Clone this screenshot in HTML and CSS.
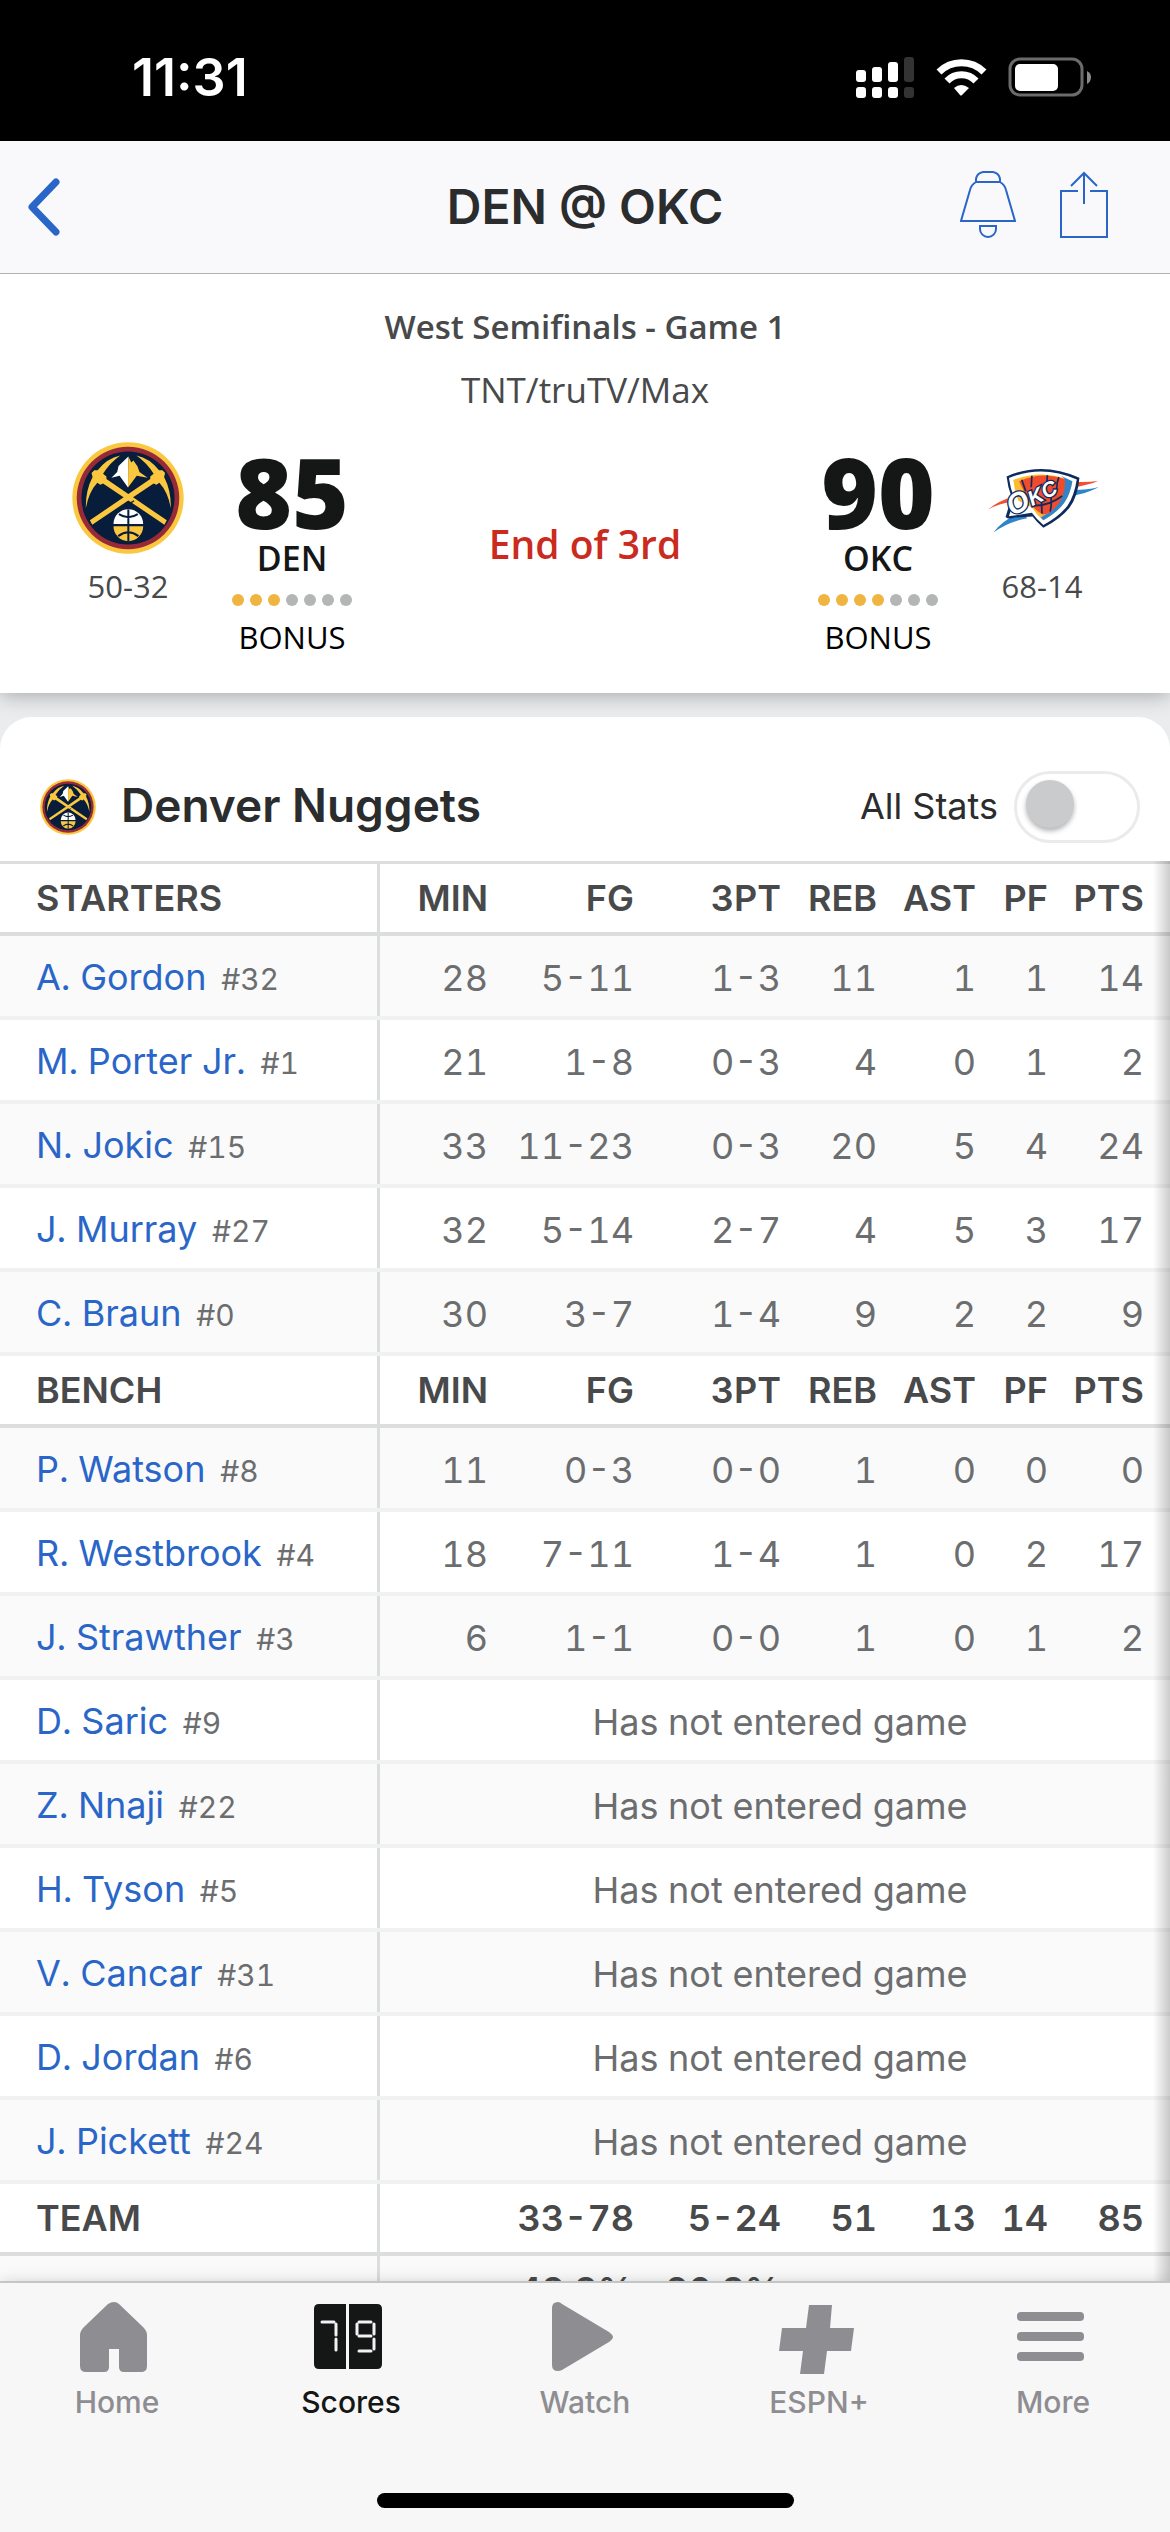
FILE: index.html
```html
<!DOCTYPE html>
<html lang="en">
<head>
  <meta charset="UTF-8">
  <meta name="viewport" content="width=device-width, initial-scale=1">
  <title>DEN @ OKC</title>
  <link rel="stylesheet" href="styles.css">
</head>
<body>

  <!-- Shared team logo -->
  <svg class="sprite" aria-hidden="true">
    <symbol id="nuggets" viewBox="0 0 332 332">
      <circle cx="166" cy="166" r="165" fill="#fac73e"/>
      <circle cx="166" cy="166" r="152" fill="#962a38"/>
      <circle cx="166" cy="166" r="138" fill="#071d3b"/>
      <path d="M167 43 L138 71 L134 89 L117 106 L141 100 L166 135 Z" fill="#fff"/>
      <path d="M167 43 L176 61 L182 55 L194 72 L200 89 L224 106 L192 100 L166 135 Z" fill="#fac73e"/>
      <g fill="#fac73e">
        <path d="M143 40 Q104 48 76 84 L66 84 L58 92 L61 104 Q40 144 41 196 Q50 148 75 121 L84 127 L92 123 L274 245 L281 232 L181 164 L102 110 L102 102 L92 94 Q112 62 143 40 Z"/>
        <path d="M191 40 Q230 48 258 84 L268 84 L276 92 L273 104 Q294 144 293 196 Q284 148 259 121 L250 127 L242 123 L60 245 L53 232 L153 164 L232 110 L232 102 L242 94 Q222 62 191 40 Z"/>
      </g>
      <path d="M172 182 L184 174" stroke="#071d3b" stroke-width="4"/>
      <path d="M123 243 A44 44 0 0 1 211 243 Z" fill="#fff"/>
      <path d="M123 250 A44 44 0 0 0 211 250 Z" fill="#fac73e"/>
      <path d="M167 200 V294 M139 214 Q167 232 195 214 M137 279 Q167 256 197 279" fill="none" stroke="#071d3b" stroke-width="6"/>
    </symbol>
  </svg>

  <div class="app">

    <div class="status">
      <span class="time">11:31</span>
      <svg class="status-icons" viewBox="0 0 236 42" aria-hidden="true">
        <g fill="#fff">
          <rect x="0" y="13" width="10" height="12" rx="3"/>
          <rect x="16" y="10" width="10" height="15" rx="3"/>
          <rect x="32" y="5" width="10" height="20" rx="3"/>
          <rect x="0" y="30" width="10" height="11" rx="3"/>
          <rect x="16" y="30" width="10" height="11" rx="3"/>
          <rect x="32" y="30" width="10" height="11" rx="3"/>
        </g>
        <g fill="#333">
          <rect x="48" y="0" width="10" height="25" rx="3"/>
          <rect x="48" y="30" width="10" height="11" rx="3"/>
        </g>
        <g fill="none" stroke="#fff" stroke-width="7">
          <path d="M83 15 A32 32 0 0 1 128 15"/>
          <path d="M91 24 A20 20 0 0 1 120 24"/>
        </g>
        <path d="M98 31 Q105 25 113 31 L106 38 Q105 39 104 38 Z" fill="#fff"/>
        <rect x="154" y="2" width="72" height="36" rx="10" fill="none" stroke="#6b6b6b" stroke-width="3"/>
        <rect x="159" y="7" width="43" height="27" rx="5" fill="#fff"/>
        <path d="M231 14 Q235 16 235 20 Q235 25 231 27 Z" fill="#8a8a8a"/>
      </svg>
    </div>

    <header class="nav">
      <a class="back" href="#" aria-label="Back">
        <svg width="34" height="58" viewBox="0 0 34 58"><path d="M29 4 L5 29 L29 54" fill="none" stroke="currentColor" stroke-width="7" stroke-linecap="round" stroke-linejoin="round"/></svg>
      </a>
      <h1>DEN @ OKC</h1>
      <div class="actions">
        <button type="button" aria-label="Alerts">
          <svg width="56" height="68" viewBox="0 0 56 68" fill="none" stroke="currentColor" stroke-width="2"><path d="M16 12 V8 Q17 2 23 1 H33 Q39 2 40 8 V12 M16 11 H40 Q45 14 46 19 L55 50 H1 L10 19 Q11 14 16 11 Z M20 55 H36 V58 A8 8 0 0 1 20 58 Z"/></svg>
        </button>
        <button type="button" aria-label="Share">
          <svg width="48" height="68" viewBox="0 0 48 68" fill="none" stroke="currentColor" stroke-width="2"><path d="M18 20 H1 V66 H47 V20 H30 M24 33 V2 M11 15 L24 2 L37 15"/></svg>
        </button>
      </div>
    </header>

    <!-- Score summary -->
    <section class="scoreboard">
      <p class="round">West Semifinals - Game 1</p>
      <p class="network">TNT/truTV/Max</p>
      <div class="matchup">
        <div class="club">
          <svg class="logo" role="img" aria-label="Denver Nuggets"><use href="#nuggets"/></svg>
          <span class="record">50-32</span>
        </div>
        <div class="score">
          <strong>85</strong>
          <span class="abbr">DEN</span>
          <div class="dots"><i class="on"></i><i class="on"></i><i class="on"></i><i></i><i></i><i></i><i></i></div>
          <span class="bonus">BONUS</span>
        </div>
        <p class="clock">End of 3rd</p>
        <div class="score">
          <strong>90</strong>
          <span class="abbr">OKC</span>
          <div class="dots"><i class="on"></i><i class="on"></i><i class="on"></i><i class="on"></i><i></i><i></i><i></i></div>
          <span class="bonus">BONUS</span>
        </div>
        <div class="club">
          <svg class="logo" viewBox="24 -34 332 332" role="img" aria-label="Oklahoma City Thunder">
            <path d="M30 166 Q60 140 104 128 L100 144 Q64 148 30 166 Z M288 84 Q326 86 358 81 Q330 94 286 100 Z" fill="#ef5133"/>
            <path d="M46 234 Q72 198 132 172 L146 192 Q90 202 46 234 Z M284 108 Q326 108 357 100 Q324 118 276 126 Z" fill="#2f85cc"/>
            <path d="M85 68 Q190 22 301 72 Q296 128 272 160 Q246 194 194 220 Q176 206 162 187 L108 190 Q90 197 82 188 L100 130 Q88 98 85 68 Z" fill="#0d2b5e"/>
            <path d="M92 73 Q190 32 293 77 Q286 124 266 154 Q242 186 194 212 Q176 198 160 176 L92 186 L108 134 Q96 104 92 73 Z" fill="#fff"/>
            <path d="M105 79 Q190 44 280 82 Q274 120 256 146 Q236 174 194 198 Q174 182 160 160 L120 140 Q108 110 105 79 Z" fill="#fdbb30"/>
            <path d="M246 66 L280 82 Q274 120 256 146 Q236 174 194 198 L186 190 Q250 160 258 76 Z" fill="#2f85cc"/>
            <path d="M122 82 Q190 52 258 76 Q262 130 226 164 Q204 184 190 180 Q166 166 150 140 Z" fill="#ef4b2c"/>
            <path d="M130 78 L142 112 M160 66 L158 100 M206 64 Q204 86 206 96 M240 70 Q232 90 234 110 M160 154 Q206 158 250 126 M188 130 L190 178 M216 126 Q220 150 214 172" fill="none" stroke="#0d2b5e" stroke-width="5"/>
            <text class="logo-text" transform="translate(102 186) rotate(-27)"><tspan class="logo-big">O</tspan>KC</text>
          </svg>
          <span class="record">68-14</span>
        </div>
      </div>
    </section>

    <!-- Box score -->
    <main class="content">
      <section class="card">
        <div class="card-head">
          <svg class="logo-small" aria-hidden="true"><use href="#nuggets"/></svg>
          <h2>Denver Nuggets</h2>
          <label for="allStats">All Stats</label>
          <input type="checkbox" id="allStats" class="toggle" role="switch">
        </div>

        <div class="table-wrap">
          <table>
            <colgroup>
              <col class="c-name"><col class="c-min"><col class="c-fg"><col class="c-3pt"><col class="c-reb"><col class="c-ast"><col class="c-pf"><col class="c-pts">
            </colgroup>
            <tbody>
              <tr class="head"><th scope="col">STARTERS</th><th scope="col">MIN</th><th scope="col">FG</th><th scope="col">3PT</th><th scope="col">REB</th><th scope="col">AST</th><th scope="col">PF</th><th scope="col">PTS</th></tr>
              <tr><th scope="row"><a href="#">A. Gordon</a> <small>#32</small></th><td>28</td><td>5-11</td><td>1-3</td><td>11</td><td>1</td><td>1</td><td>14</td></tr>
              <tr><th scope="row"><a href="#">M. Porter Jr.</a> <small>#1</small></th><td>21</td><td>1-8</td><td>0-3</td><td>4</td><td>0</td><td>1</td><td>2</td></tr>
              <tr><th scope="row"><a href="#">N. Jokic</a> <small>#15</small></th><td>33</td><td>11-23</td><td>0-3</td><td>20</td><td>5</td><td>4</td><td>24</td></tr>
              <tr><th scope="row"><a href="#">J. Murray</a> <small>#27</small></th><td>32</td><td>5-14</td><td>2-7</td><td>4</td><td>5</td><td>3</td><td>17</td></tr>
              <tr><th scope="row"><a href="#">C. Braun</a> <small>#0</small></th><td>30</td><td>3-7</td><td>1-4</td><td>9</td><td>2</td><td>2</td><td>9</td></tr>
            </tbody>
            <tbody>
              <tr class="head"><th scope="col">BENCH</th><th scope="col">MIN</th><th scope="col">FG</th><th scope="col">3PT</th><th scope="col">REB</th><th scope="col">AST</th><th scope="col">PF</th><th scope="col">PTS</th></tr>
              <tr><th scope="row"><a href="#">P. Watson</a> <small>#8</small></th><td>11</td><td>0-3</td><td>0-0</td><td>1</td><td>0</td><td>0</td><td>0</td></tr>
              <tr><th scope="row"><a href="#">R. Westbrook</a> <small>#4</small></th><td>18</td><td>7-11</td><td>1-4</td><td>1</td><td>0</td><td>2</td><td>17</td></tr>
              <tr><th scope="row"><a href="#">J. Strawther</a> <small>#3</small></th><td>6</td><td>1-1</td><td>0-0</td><td>1</td><td>0</td><td>1</td><td>2</td></tr>
              <tr><th scope="row"><a href="#">D. Saric</a> <small>#9</small></th><td class="dnp" colspan="7">Has not entered game</td></tr>
              <tr><th scope="row"><a href="#">Z. Nnaji</a> <small>#22</small></th><td class="dnp" colspan="7">Has not entered game</td></tr>
              <tr><th scope="row"><a href="#">H. Tyson</a> <small>#5</small></th><td class="dnp" colspan="7">Has not entered game</td></tr>
              <tr><th scope="row"><a href="#">V. Cancar</a> <small>#31</small></th><td class="dnp" colspan="7">Has not entered game</td></tr>
              <tr><th scope="row"><a href="#">D. Jordan</a> <small>#6</small></th><td class="dnp" colspan="7">Has not entered game</td></tr>
              <tr><th scope="row"><a href="#">J. Pickett</a> <small>#24</small></th><td class="dnp" colspan="7">Has not entered game</td></tr>
            </tbody>
            <tbody>
              <tr class="head"><th scope="row">TEAM</th><td></td><td>33-78</td><td>5-24</td><td>51</td><td>13</td><td>14</td><td>85</td></tr>
              <tr class="head percent"><th></th><td></td><td>42.3%</td><td>20.8%</td><td></td><td></td><td></td><td></td></tr>
            </tbody>
          </table>
        </div>
      </section>
    </main>

    <nav class="tabs">
      <a href="#">
        <svg viewBox="0 0 76 76"><path d="M38 4 Q41 4 43 6 L67 29 Q71 33 71 37 V68 Q71 74 65 74 H48 Q43 74 43 69 V51 H33 V69 Q33 74 28 74 H10 Q4 74 4 68 V37 Q4 33 8 29 L32 6 Q35 4 38 4 Z"/></svg>
        Home
      </a>
      <a href="#" class="active" aria-current="page">
        <svg viewBox="0 0 76 76">
          <path d="M9 6 H36 V71 H9 Q4 71 4 66 V11 Q4 6 9 6 Z M39 6 H67 Q72 6 72 11 V66 Q72 71 67 71 H39 Z"/>
          <path d="M12 24 H24 M26 26 V37 M26 41 V52 M49 24 H61 M47 26 V36 M64 26 V36 M49 38 H61 M64 41 V51 M49 53 H61" stroke="#f0f2f5" stroke-width="3" stroke-linecap="round"/>
        </svg>
        Scores
      </a>
      <a href="#">
        <svg viewBox="0 0 76 76"><path d="M8 10 Q8 4 14 4 Q16 4 18 6 L65 34 Q69 37 69 39 Q69 41 65 44 L18 72 Q16 73 14 73 Q8 73 8 67 Z"/></svg>
        Watch
      </a>
      <a href="#">
        <svg viewBox="0 0 76 76"><path d="M31 7 H54 L52 30 H76 L73 53 H49 L46 76 H22 L25 53 H1 L4 30 H28 Z"/></svg>
        ESPN+
      </a>
      <a href="#">
        <svg viewBox="0 0 76 76"><rect x="5" y="14" width="67" height="9" rx="4"/><rect x="5" y="34" width="67" height="9" rx="4"/><rect x="5" y="54" width="67" height="9" rx="4"/></svg>
        More
      </a>
      <div class="home-bar"></div>
    </nav>

  </div>

</body>
</html>
```

FILE: styles.css
```css
* {
  box-sizing: border-box;
}

body {
  margin: 0;
  font-family: Inter, "Liberation Sans", sans-serif;
  background: #ebecee;
  color: #2b2c2d;
}

h1, h2, p {
  margin: 0;
}

a {
  color: #2a66c8;
  text-decoration: none;
}

.sprite {
  display: none;
}

.app {
  display: flex;
  flex-direction: column;
  height: 100vh;
}

/* Status bar */
.status {
  display: flex;
  justify-content: space-between;
  align-items: center;
  padding: 48px 78px 33px 132px;
  background: #000;
  color: #fff;
}

.time {
  font-size: 52px;
  line-height: 60px;
  font-weight: 600;
}

.status-icons {
  width: 236px;
  height: 42px;
}

/* Title bar */
.nav {
  position: relative;
  z-index: 1;
  display: grid;
  grid-template-columns: 1fr auto 1fr;
  align-items: center;
  padding: 30px 0;
  background: #f9f9fb;
  border-bottom: 1px solid #b2b2b4;
}

.nav h1 {
  font-size: 48px;
  line-height: 72px;
  font-weight: 600;
}

.nav svg {
  display: block;
}

.back {
  padding-left: 27px;
}

.actions {
  display: flex;
  align-self: start;
  justify-content: flex-end;
  gap: 44px;
  padding-right: 62px;
}

.actions button {
  padding: 0;
  border: none;
  background: none;
  color: #2a66c8;
}

/* Scoreboard */
.scoreboard {
  position: relative;
  padding: 29px 60px 34px;
  background: #fff;
  box-shadow: 0 2px 20px rgba(0, 0, 0, 0.3);
  font-family: "Open Sans", Inter, sans-serif;
  text-align: center;
}

.round, .network {
  line-height: 48px;
  color: #48494a;
}

.round {
  font-size: 33px;
  font-weight: 600;
}

.network {
  margin-top: 15px;
  font-size: 35px;
}

.matchup {
  display: grid;
  grid-template-columns: 136px 192px 1fr 192px 136px;
  margin-top: 28px;
}

.club, .score {
  display: flex;
  flex-direction: column;
  align-items: center;
}

.logo {
  width: 112px;
  height: 112px;
}

.logo-text {
  font-family: "Liberation Sans", sans-serif;
  font-size: 62px;
  font-weight: 700;
  font-style: italic;
  fill: #fff;
  stroke: #0d2b5e;
  stroke-width: 8px;
  paint-order: stroke;
}

.logo-big {
  font-size: 84px;
}

.record {
  margin-top: 10px;
  font-size: 31px;
  line-height: 44px;
  color: #48494a;
}

.score strong {
  font-size: 97px;
  line-height: 98px;
  font-weight: 800;
  color: #151716;
}

.abbr {
  font-size: 34px;
  line-height: 36px;
  font-weight: 600;
  color: #151716;
}

.dots {
  display: flex;
  gap: 6px;
  margin: 18px 0 9px;
}

.dots i {
  width: 12px;
  height: 12px;
  border-radius: 50%;
  background: #b4b5b5;
}

.dots i.on {
  background: #f0b440;
}

.bonus {
  font-size: 31px;
  line-height: 44px;
  color: #000;
}

.clock {
  margin-top: 74px;
  font-size: 39px;
  line-height: 56px;
  font-weight: 600;
  color: #cb2a1f;
}

/* Box score card */
.content {
  flex: 1;
  min-height: 0;
  padding-top: 24px;
  overflow-y: auto;
  scrollbar-width: none;
}

.card {
  background: #fff;
  border-radius: 32px 32px 0 0;
}

.card-head {
  display: flex;
  align-items: center;
  padding: 54px 30px 18px 40px;
}

.logo-small {
  width: 56px;
  height: 56px;
}

.card-head h2 {
  flex: 1;
  margin: 0 0 4px 25px;
  font-size: 46px;
  line-height: 56px;
  font-weight: 600;
}

.card-head label {
  margin: 0 16px 2px 0;
  font-size: 36px;
}

.toggle {
  appearance: none;
  width: 126px;
  height: 72px;
  margin: 0;
  padding: 6px 9px;
  border: 3px solid #ebebec;
  border-radius: 36px;
  background: #fff;
}

.toggle::before {
  content: "";
  display: block;
  width: 48px;
  height: 48px;
  border-radius: 50%;
  background: #c9cbcd;
  box-shadow: 0 3px 5px rgba(0, 0, 0, 0.3);
}

.toggle:checked::before {
  margin-left: auto;
}

.table-wrap {
  position: relative;
}

/* Shade on the right edge of the scrollable stats */
.table-wrap::after {
  content: "";
  position: absolute;
  top: 0;
  right: 0;
  bottom: 0;
  width: 17px;
  background: linear-gradient(to right, rgba(0, 0, 0, 0), rgba(0, 0, 0, 0.2));
}

table {
  width: 100%;
  table-layout: fixed;
  border-collapse: separate;
  border-spacing: 0;
  border-top: 3px solid #dcddde;
  font-variant-numeric: tabular-nums;
}

.c-name { width: 380px; }
.c-min { width: 120px; }
.c-fg { width: 146px; }
.c-3pt { width: 147px; }
.c-reb { width: 96px; }
.c-ast { width: 99px; }
.c-pf { width: 72px; }
.c-pts { width: 110px; }

th, td {
  height: 84px;
  padding: 4px 12px 0 0;
  border-bottom: 4px solid #f0f1f2;
  font-size: 36px;
  line-height: 44px;
  font-weight: 400;
  text-align: right;
  white-space: nowrap;
  color: #6c6d6f;
}

th:first-child {
  padding-left: 36px;
  text-align: left;
  box-shadow: inset -3px 0 #dcddde;
}

td:last-child, th:last-child {
  padding-right: 26px;
}

tr:nth-child(even) {
  background: #fafafa;
}

small {
  margin-left: 5px;
  font-size: 30px;
}

.head th, .head td {
  height: 72px;
  padding-top: 0;
  border-bottom-color: #dcddde;
  font-weight: 600;
  color: #48494a;
}

td.dnp {
  padding: 4px 0 0 10px;
  text-align: center;
}

/* Bottom tab bar */
.tabs {
  position: relative;
  display: grid;
  grid-template-columns: repeat(5, 1fr);
  padding: 15px 0 24px;
  border-top: 2px solid #c4c5c5;
  background: #f7f7f7;
  box-shadow: 0 0 14px rgba(0, 0, 0, 0.15);
}

.tabs a {
  display: flex;
  flex-direction: column;
  align-items: center;
  gap: 8px;
  font-size: 30px;
  line-height: 40px;
  font-weight: 500;
  color: #8e8d92;
}

.tabs a.active {
  color: #151716;
}

.tabs svg {
  width: 76px;
  height: 76px;
  margin-right: 6px;
  fill: currentColor;
}

.home-bar {
  grid-column: 1 / -1;
  justify-self: center;
  width: 417px;
  max-width: 60%;
  height: 15px;
  margin-top: 71px;
  border-radius: 8px;
  background: #000;
}
```
